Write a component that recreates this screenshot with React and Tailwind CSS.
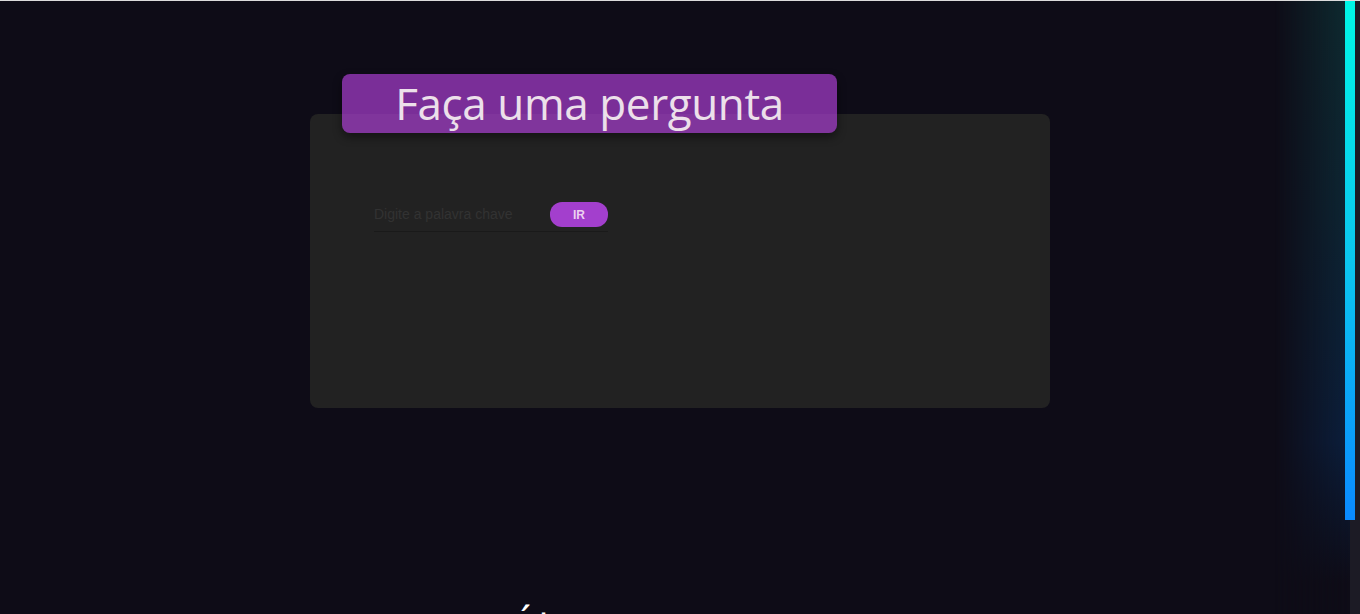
import React from 'react';

function Badge() {
    return (
        <div className="relative z-10 ml-[32px] -mb-[19px] w-[495px] h-[59px] rounded-[8px] bg-[#a83dd0]/70 shadow-[0_4px_10px_rgba(0,0,0,0.45)] flex items-center justify-center">
            <h1 className="font-['Open_Sans',sans-serif] font-medium text-[44px] leading-none text-[#ece0ea] tracking-[-0.4px] pb-[2px]">
                Faça uma pergunta
            </h1>
        </div>
    );
}

function SearchBox() {
    return (
        <div className="w-[234px] flex items-center justify-between border-b border-[#1a1a1a] pb-[4px]">
            <input
                type="text"
                placeholder="Digite a palavra chave"
                className="w-[170px] bg-transparent outline-none font-['Liberation_Sans',sans-serif] text-[14px] text-[#bbb] placeholder:text-[#323232]"
            />
            <button className="w-[58px] h-[25px] rounded-[12px] bg-[#a33fcd] font-['Liberation_Sans',sans-serif] text-[12px] font-bold text-[#ecd0f0]">
                IR
            </button>
        </div>
    );
}

export default function App() {
    return (
        <div className="relative min-h-[726px] bg-[#0e0c17] overflow-hidden">
            <div className="fixed top-0 left-0 right-0 h-px bg-[#dcdcdc] z-30" />

            {/* right side glow + scrollbar */}
            <div className="fixed top-0 right-[10px] w-[75px] h-[614px] z-20 pointer-events-none bg-[linear-gradient(to_bottom,#0e2c31,#0d2634_35%,#0b1f3d_72%,#0e0c17_95%)] [mask-image:linear-gradient(to_left,black,transparent)]" />
            <div className="fixed top-0 right-0 w-[10px] h-[614px] bg-[#1c1b25] z-20" />
            <div className="fixed top-px right-[5px] w-[10px] h-[519px] z-20 bg-[linear-gradient(to_bottom,#00f6e6,#0bc6ef_50%,#0a8aff)]" />

            <main className="flex flex-col items-center pt-[74px]">
                <div className="w-[740px]">
                    <Badge />
                    <section className="h-[294px] rounded-[8px] bg-[#222222] pt-[88px] pl-[64px]">
                        <SearchBox />
                    </section>
                </div>

                <h2 className="mt-[200px] font-['Open_Sans',sans-serif] text-[40px] leading-none text-white">
                    <span>Últimas </span>
                    <span className="text-[#a83dd0]">Perguntas</span>
                </h2>
            </main>
        </div>
    );
}
